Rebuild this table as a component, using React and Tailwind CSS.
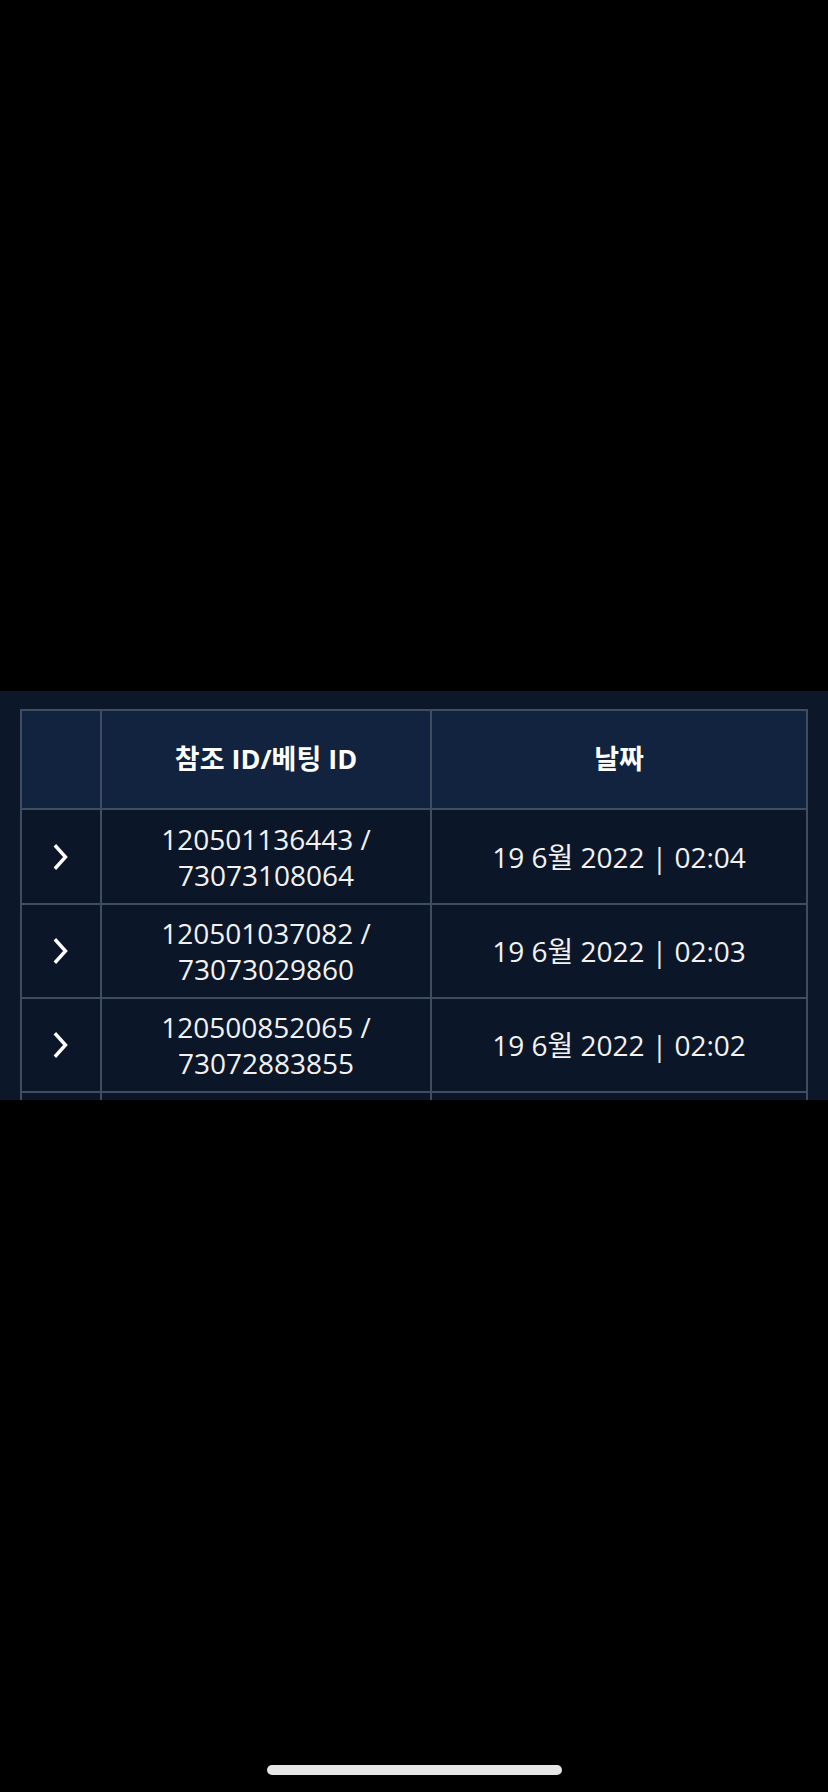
const rows = [
  { ref: '120501136443 /', bet: '73073108064', date: '19 6월 2022 | 02:04', h: 'h-[93px]' },
  { ref: '120501037082 /', bet: '73073029860', date: '19 6월 2022 | 02:03', h: 'h-[92px]' },
  { ref: '120500852065 /', bet: '73072883855', date: '19 6월 2022 | 02:02', h: 'h-[92px]' },
]

function Chevron() {
  return (
    <svg width="16" height="26" viewBox="0 0 16 26" fill="none">
      <path d="M3 2.5 L12.5 13 L3 23.5" stroke="#ffffff" strokeWidth="3.4" strokeLinecap="square" strokeLinejoin="miter" />
    </svg>
  )
}

export default function App() {
  return (
    <div className="min-h-[1792px] w-[828px] bg-black flex flex-col font-['Open_Sans','Noto_Sans_CJK_KR',sans-serif]">
      <div className="h-[691px] shrink-0" />

      <div className="h-[409px] shrink-0 overflow-hidden bg-[#0c1829] px-[20px] pt-[18px]">
        <div className="grid grid-cols-[78px_328px_374px] gap-[2px] bg-[#3f4d63] p-[2px]">
          <div className="h-[97px] bg-[#11233f]" />
          <div className="h-[97px] bg-[#11233f] flex items-center justify-center text-[27px] font-bold text-white">
            참조 ID/베팅 ID
          </div>
          <div className="h-[97px] bg-[#11233f] flex items-center justify-center text-[27px] font-bold text-white">
            날짜
          </div>

          {rows.map((r, i) => (
            <div key={i} className="contents">
              <div className={`${r.h} bg-[#0b1729] flex items-center justify-center`}>
                <Chevron />
              </div>
              <div className={`${r.h} bg-[#0b1729] flex flex-col items-center justify-center text-[28px] leading-[36px] text-[#f2f2f2]`}>
                <span>{r.ref}</span>
                <span>{r.bet}</span>
              </div>
              <div className={`${r.h} bg-[#0b1729] flex items-center justify-center text-[28px] leading-[36px] text-[#f2f2f2]`}>
                {r.date}
              </div>
            </div>
          ))}

          <div className="h-[92px] bg-[#0b1729]" />
          <div className="h-[92px] bg-[#0b1729]" />
          <div className="h-[92px] bg-[#0b1729]" />
        </div>
      </div>

      <div className="flex-1 flex flex-col justify-end items-center pb-[17px]">
        <div className="w-[295px] h-[10px] rounded-full bg-[#e6e6e6]" />
      </div>
    </div>
  )
}
